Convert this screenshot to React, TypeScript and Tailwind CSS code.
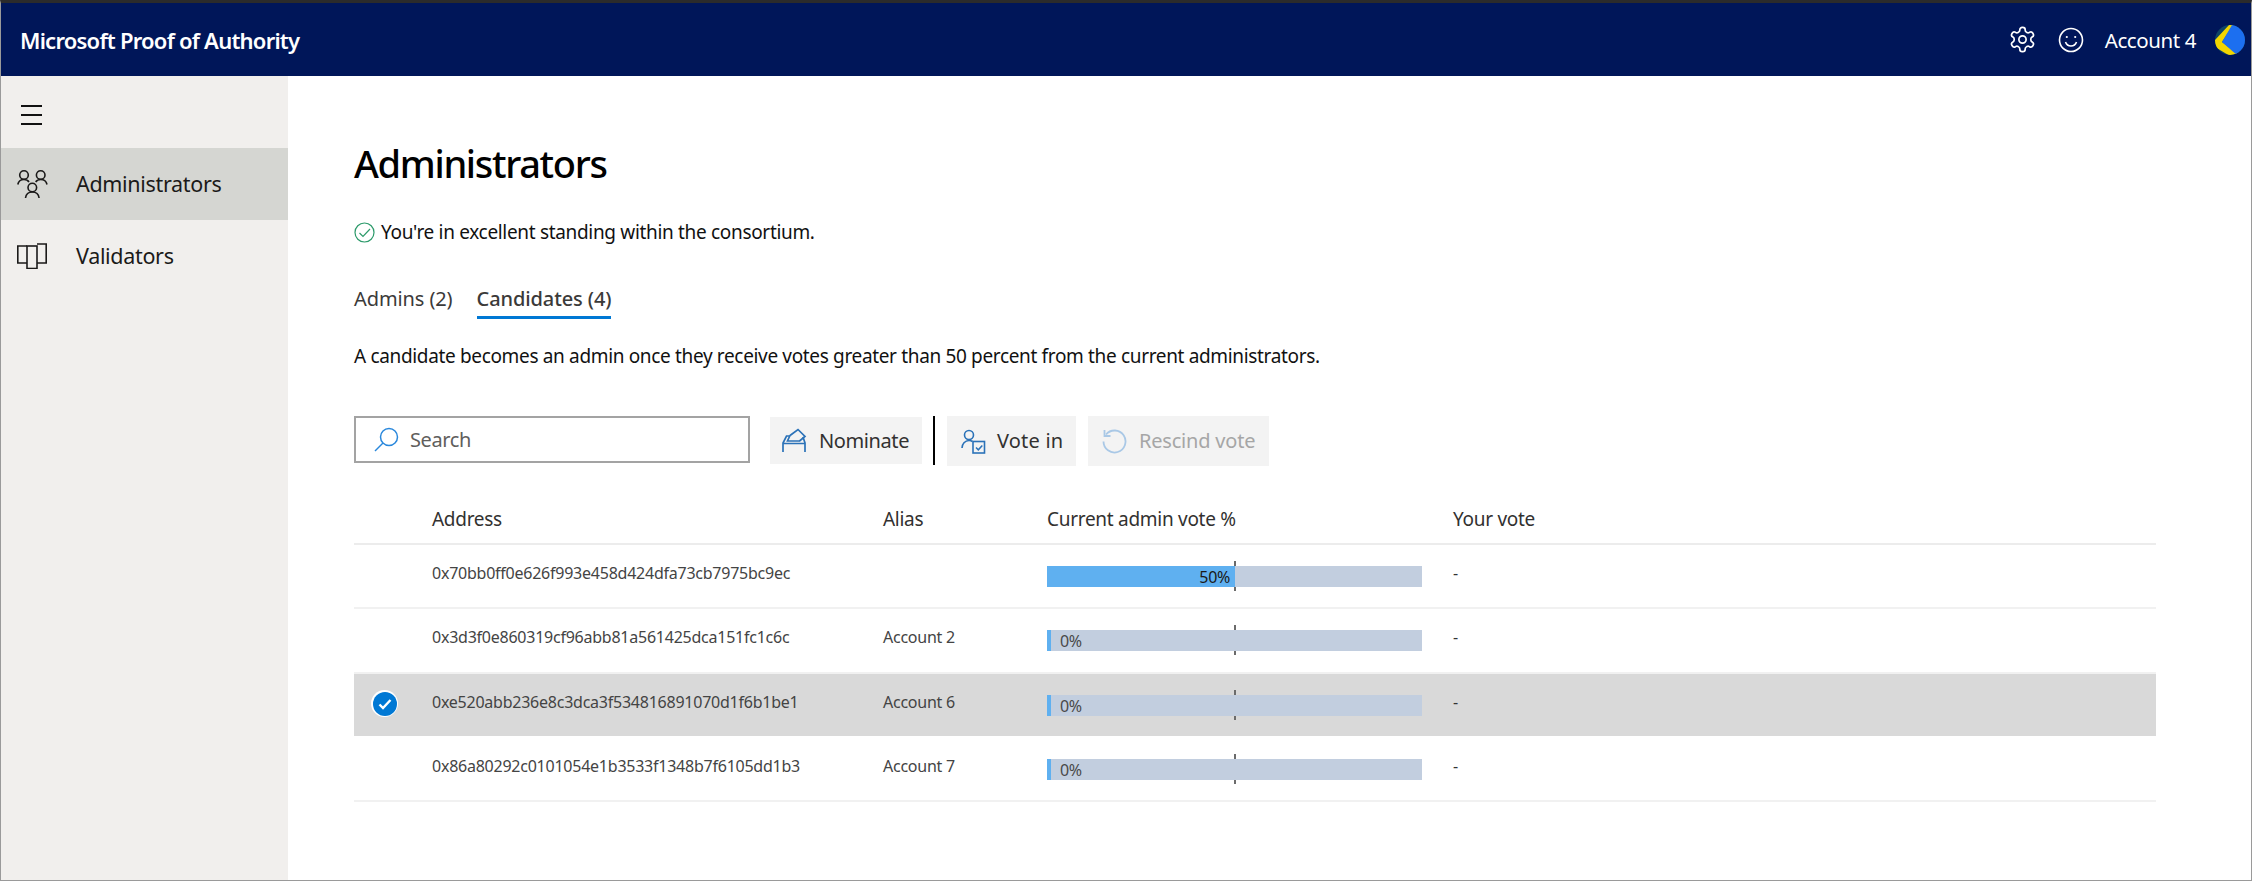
import React from "react";

const font = { fontFamily: '"Noto Sans", sans-serif' };

function AdminsIcon() {
  return (
    <svg width="31" height="30" viewBox="0 0 31 30" fill="none" stroke="#1b1a19" strokeWidth="1.600">
      <circle cx="7" cy="6" r="4.300" />
      <circle cx="23.700" cy="6" r="4.300" />
      <circle cx="15.300" cy="18.500" r="4.300" />
      <path d="M.8 15.500c.6-3 3-5 6.200-5 2.200 0 4 .9 5 2.500M30 15.500c-.6-3-3-5-6.300-5-2.200 0-4 .9-5 2.500M8.500 29c.5-4 3.200-6 6.800-6s6.300 2 6.800 6" />
    </svg>
  );
}

function ValidatorsIcon() {
  return (
    <svg width="30" height="26" viewBox="0 0 30 26" fill="none" stroke="#1b1a19" strokeWidth="1.600">
      <path d="M10 3H.8v17H10M20 20h9.200V1H20" />
      <rect x="10" y="3" width="10" height="22.500" />
    </svg>
  );
}

function NominateIcon() {
  return (
    <svg width="25" height="25" viewBox="0 0 25 25" fill="none" stroke="#2b72b8" strokeWidth="1.700">
      <path d="M1 24V15L4.500 8H8M23 24V15L21 9M1 15.500h22" />
      <path d="M8 7.500 16 1.500l7 7-5.500 4.500" />
      <path d="M8 7.500 5.500 13H18" />
    </svg>
  );
}

function VoteIcon() {
  return (
    <svg width="25" height="25" viewBox="0 0 25 25" fill="none" stroke="#2b72b8" strokeWidth="1.600">
      <circle cx="8" cy="6" r="4.500" />
      <path d="M1 19c0-4 3-7.500 7-7.500 1.500 0 2.500.3 3.500 1" />
      <rect x="12" y="12.500" width="11.500" height="11.500" />
      <path d="M15 18.500l2.300 2.300 4-4.300" strokeWidth="1.500" />
    </svg>
  );
}

function Bar({ pct, label }: { pct: number; label: string }) {
  return (
    <div className="relative w-[375px] h-[21px] bg-[#c2cedf]">
      <div className="h-full bg-[#5fb0f0]" style={{ width: pct === 0 ? 4 : `${pct}%` }} />
      <span
        className={
          pct === 0
            ? "absolute left-[13px] top-[1px] text-[16px] leading-[21px] tracking-[-0.02em] text-[#4a4a4a]"
            : "absolute right-[192px] top-[1px] text-[16px] leading-[21px] tracking-[-0.02em] text-[#1b1a19]"
        }
      >
        {label}
      </span>
      <div className="absolute left-[187px] top-[-5px] w-[2px] h-[5px] bg-[#6b6b6b]" />
      <div className="absolute left-[187px] bottom-[-4px] w-[2px] h-[4px] bg-[#6b6b6b]" />
    </div>
  );
}

function Row({
  address,
  alias,
  pct,
  selected,
  rowClass,
}: {
  address: string;
  alias: string;
  pct: number;
  selected?: boolean;
  rowClass: string;
}) {
  return (
    <div className={`flex items-center ${rowClass}`}>
      <div className="w-[78px] pl-[17px] flex items-center">
        {selected && (
          <div className="mb-[3px] w-[27px] h-[27px] rounded-full bg-white flex items-center justify-center">
            <div className="w-[24px] h-[24px] rounded-full bg-[#0078d4] flex items-center justify-center">
              <svg width="14" height="12" viewBox="0 0 14 12" fill="none" stroke="#fff" strokeWidth="2.400">
                <path d="M1.500 6.500 5 10l7.500-8" />
              </svg>
            </div>
          </div>
        )}
      </div>
      <div className="w-[451px] pb-[7px] text-[16px] tracking-[-0.015em] text-[#444]">{address}</div>
      <div className="w-[164px] pb-[7px] text-[16px] tracking-[-0.015em] text-[#444]">{alias}</div>
      <div className="w-[406px]">
        <Bar pct={pct} label={`${pct}%`} />
      </div>
      <div className="pb-[7px] text-[16px] text-[#333]">-</div>
    </div>
  );
}

export default function App() {
  return (
    <div style={font} className="w-[2252px] h-[881px] flex flex-col bg-white border-x border-b border-[#9a9a9a] border-t-[3px] border-t-[#2b2b2b] overflow-hidden">
      <header className="h-[73px] shrink-0 bg-[#001659] flex items-center text-white">
        <div className="pl-[19px] pt-[2px] text-[22px] font-semibold tracking-[-0.035em]">Microsoft Proof of Authority</div>
        <div className="ml-auto flex items-center">
          <svg width="29" height="29" viewBox="0 0 24 24" fill="none" stroke="#fff" strokeWidth="1.400" strokeLinecap="round" strokeLinejoin="round">
            <path d="M12.220 2h-.44a2 2 0 0 0-2 2v.18a2 2 0 0 1-1 1.730l-.43.25a2 2 0 0 1-2 0l-.15-.08a2 2 0 0 0-2.730.730l-.22.380a2 2 0 0 0 .730 2.730l.15.100a2 2 0 0 1 1 1.720v.510a2 2 0 0 1-1 1.740l-.15.090a2 2 0 0 0-.730 2.730l.22.380a2 2 0 0 0 2.730.730l.15-.080a2 2 0 0 1 2 0l.43.250a2 2 0 0 1 1 1.730V20a2 2 0 0 0 2 2h.44a2 2 0 0 0 2-2v-.18a2 2 0 0 1 1-1.730l.43-.25a2 2 0 0 1 2 0l.15.080a2 2 0 0 0 2.730-.730l.22-.390a2 2 0 0 0-.730-2.730l-.15-.080a2 2 0 0 1-1-1.740v-.500a2 2 0 0 1 1-1.740l.15-.090a2 2 0 0 0 .730-2.730l-.22-.380a2 2 0 0 0-2.730-.730l-.15.080a2 2 0 0 1-2 0l-.43-.250a2 2 0 0 1-1-1.730V4a2 2 0 0 0-2-2z" />
            <circle cx="12" cy="12" r="3" />
          </svg>
          <svg className="ml-[21px]" width="26" height="26" viewBox="0 0 26 26" fill="none" stroke="#fff" strokeWidth="1.600">
            <circle cx="13" cy="13" r="11.500" />
            <circle cx="8.800" cy="10" r="1.100" fill="#fff" stroke="none" />
            <circle cx="17.200" cy="10" r="1.100" fill="#fff" stroke="none" />
            <path d="M7.500 15c1 2.800 3 4 5.500 4s4.500-1.200 5.500-4" />
          </svg>
          <span className="ml-[21px] pt-[2px] text-[20.500px] tracking-[-0.02em]">Account 4</span>
          <svg className="ml-[19px] mr-[6px]" width="30" height="30" viewBox="0 0 30 30">
            <defs>
              <clipPath id="c"><circle cx="15" cy="15" r="15" /></clipPath>
            </defs>
            <g clipPath="url(#c)">
              <rect width="30" height="30" fill="#0f4565" />
              <path d="M14 0 0 15l0 7 15 9h10L7 17 18 0z" fill="#f2d600" />
              <path d="M17 0h13v22l-7 9L7 17z" fill="#1c6ff0" />
            </g>
          </svg>
        </div>
      </header>

      <div className="flex flex-1 min-h-0">
        <aside className="w-[287px] shrink-0 bg-[#f1efed]">
          <div className="h-[72px] pl-[20px] pt-[6px] flex items-center">
            <div className="w-[21px] flex flex-col gap-[7px]">
              <div className="h-[2px] bg-[#111]" />
              <div className="h-[2px] bg-[#111]" />
              <div className="h-[2px] bg-[#111]" />
            </div>
          </div>
          <div className="h-[72px] bg-[#d5d6d2] flex items-center text-[21.500px] text-[#1b1a19] tracking-[-0.015em]">
            <div className="w-[75px] pl-[16px]"><AdminsIcon /></div>
            Administrators
          </div>
          <div className="h-[72px] flex items-center text-[21.500px] text-[#1b1a19] tracking-[-0.015em]">
            <div className="w-[75px] pl-[16px]"><ValidatorsIcon /></div>
            Validators
          </div>
        </aside>

        <main className="flex-1 pl-[66px] pr-[95px]">
          <h1 className="mt-[62px] text-[38px] leading-[50px] font-medium text-black tracking-[-0.035em]">Administrators</h1>
          <div className="mt-[31px] flex items-center gap-[6px] text-[19px] leading-[26px] text-[#111] tracking-[-0.017em]">
            <svg width="21" height="21" viewBox="0 0 21 21" fill="none" strokeWidth="1.200">
              <circle cx="10.500" cy="10.500" r="9.500" stroke="#2c9a6a" />
              <path d="M5.500 11l3.500 3.500 7-7.500" stroke="#2c9a6a" />
            </svg>
            You're in excellent standing within the consortium.
          </div>
          <div className="mt-[41px] flex gap-[24px] text-[20px] leading-[26px] text-[#3b3a39] tracking-[-0.005em]">
            <div>Admins (2)</div>
            <div className="font-medium border-b-[3px] border-[#0078d4] pb-[4px]">Candidates (4)</div>
          </div>
          <p className="mt-[24px] text-[19px] leading-[26px] text-[#111] tracking-[-0.018em]">
            A candidate becomes an admin once they receive votes greater than 50 percent from the current administrators.
          </p>
          <div className="mt-[47px] flex items-start text-[20px] tracking-[-0.02em]">
            <div className="w-[396px] h-[47px] border-2 border-[#a3a3a3] flex items-center pl-[18px] text-[#605e5c]">
              <svg width="25" height="25" viewBox="0 0 25 25" fill="none" stroke="#2a88dc" strokeWidth="1.500">
                <circle cx="15" cy="10" r="8.500" />
                <path d="M9 16 1 24" />
              </svg>
              <span className="ml-[11px] pt-[1px]">Search</span>
            </div>
            <button className="ml-[20px] mt-[1px] h-[47px] w-[152px] bg-[#f3f3f3] flex items-center pl-[12px] text-[#323130]">
              <NominateIcon />
              <span className="ml-[12px]">Nominate</span>
            </button>
            <div className="ml-[11px] w-[2px] h-[49px] bg-black" />
            <button className="ml-[12px] h-[50px] w-[129px] bg-[#f3f3f3] flex items-center pl-[14px] text-[#323130] tracking-[0.01em]">
              <VoteIcon />
              <span className="ml-[11px]">Vote in</span>
            </button>
            <button className="ml-[12px] h-[50px] w-[181px] bg-[#f3f3f3] flex items-center pl-[14px] text-[#a6a6a6] tracking-[-0.01em]">
              <svg width="25" height="25" viewBox="0 0 25 25" fill="none" stroke="#a9c8e6" strokeWidth="1.800">
                <path d="M4 5.500A11 11 0 1 1 1.500 12.500" />
                <path d="M2.500 1v6h6" />
              </svg>
              <span className="ml-[12px]">Rescind vote</span>
            </button>
          </div>

          <div className="mt-[31px] h-[48px] flex items-center border-b-2 border-[#ececec] text-[19px] text-[#323130] tracking-[-0.015em]">
            <div className="w-[78px]" />
            <div className="w-[451px] pb-[2px]">Address</div>
            <div className="w-[164px] pb-[2px]">Alias</div>
            <div className="w-[406px] pb-[2px]">Current admin vote %</div>
            <div className="pb-[2px]">Your vote</div>
          </div>
          <Row address="0x70bb0ff0e626f993e458d424dfa73cb7975bc9ec" alias="" pct={50} rowClass="h-[64px] border-b-2 border-[#f1f1f1]" />
          <Row address="0x3d3f0e860319cf96abb81a561425dca151fc1c6c" alias="Account 2" pct={0} rowClass="h-[65px] border-b-2 border-[#f1f1f1]" />
          <Row address="0xe520abb236e8c3dca3f534816891070d1f6b1be1" alias="Account 6" pct={0} selected rowClass="h-[62px] bg-[#d9d9d9]" />
          <Row address="0x86a80292c0101054e1b3533f1348b7f6105dd1b3" alias="Account 7" pct={0} rowClass="h-[66px] pt-[3px] border-b-2 border-[#f1f1f1]" />
        </main>
      </div>
    </div>
  );
}
